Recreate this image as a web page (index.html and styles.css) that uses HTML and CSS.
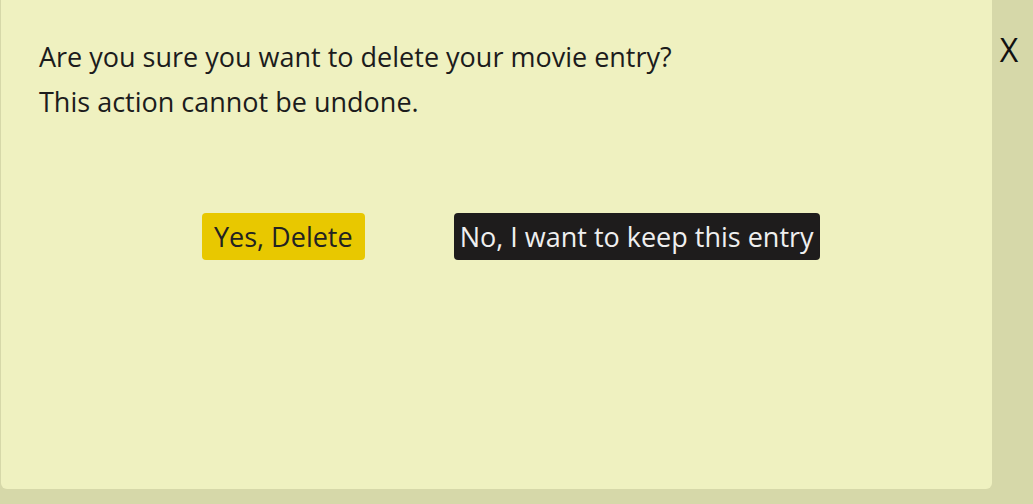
FILE: index.html
```html
<!DOCTYPE html>
<html>
<head>
<meta charset="utf-8">
<link rel="stylesheet" href="styles.css">
</head>
<body>
<div class="overlay">
  <div class="dialog">
    <p class="msg">Are you sure you want to delete your movie entry?</p>
    <p class="msg">This action cannot be undone.</p>
    <div class="actions">
      <button class="btn btn-yes">Yes, Delete</button>
      <button class="btn btn-no">No, I want to keep this entry</button>
    </div>
  </div>
  <div class="close">X</div>
</div>
</body>
</html>
```

FILE: styles.css
```css
html, body {
  margin: 0;
  padding: 0;
  background: #d6d8a9;
  height: 100%;
}
.overlay {
  display: flex;
  align-items: flex-start;
  height: 504px;
}
.dialog {
  width: 991px;
  height: 489px;
  margin-left: 1px;
  background: #eff1c0;
  border-radius: 0 0 6px 6px;
  box-sizing: border-box;
  padding: 34px 0 0 38px;
  font-family: "Open Sans", sans-serif;
  color: #1c1c1c;
}
.msg {
  margin: 0;
  font-size: 27px;
  line-height: 45px;
}
.actions {
  display: flex;
  align-items: flex-start;
  gap: 89px;
  margin-top: 89px;
  margin-left: 163px;
}
.btn {
  font-family: "Open Sans", sans-serif;
  font-size: 27px;
  border: none;
  border-radius: 4px;
  height: 47px;
  padding: 0 12px;
  cursor: pointer;
}
.btn-yes {
  background: #e8c800;
  color: #222;
}
.btn-no {
  background: #1e1c1c;
  color: #efefef;
  padding: 0 6px;
}
.close {
  flex: 1;
  text-align: center;
  font-family: "Open Sans", sans-serif;
  font-size: 32px;
  line-height: 32px;
  color: #111;
  padding: 34px 7px 0 0;
}
```
